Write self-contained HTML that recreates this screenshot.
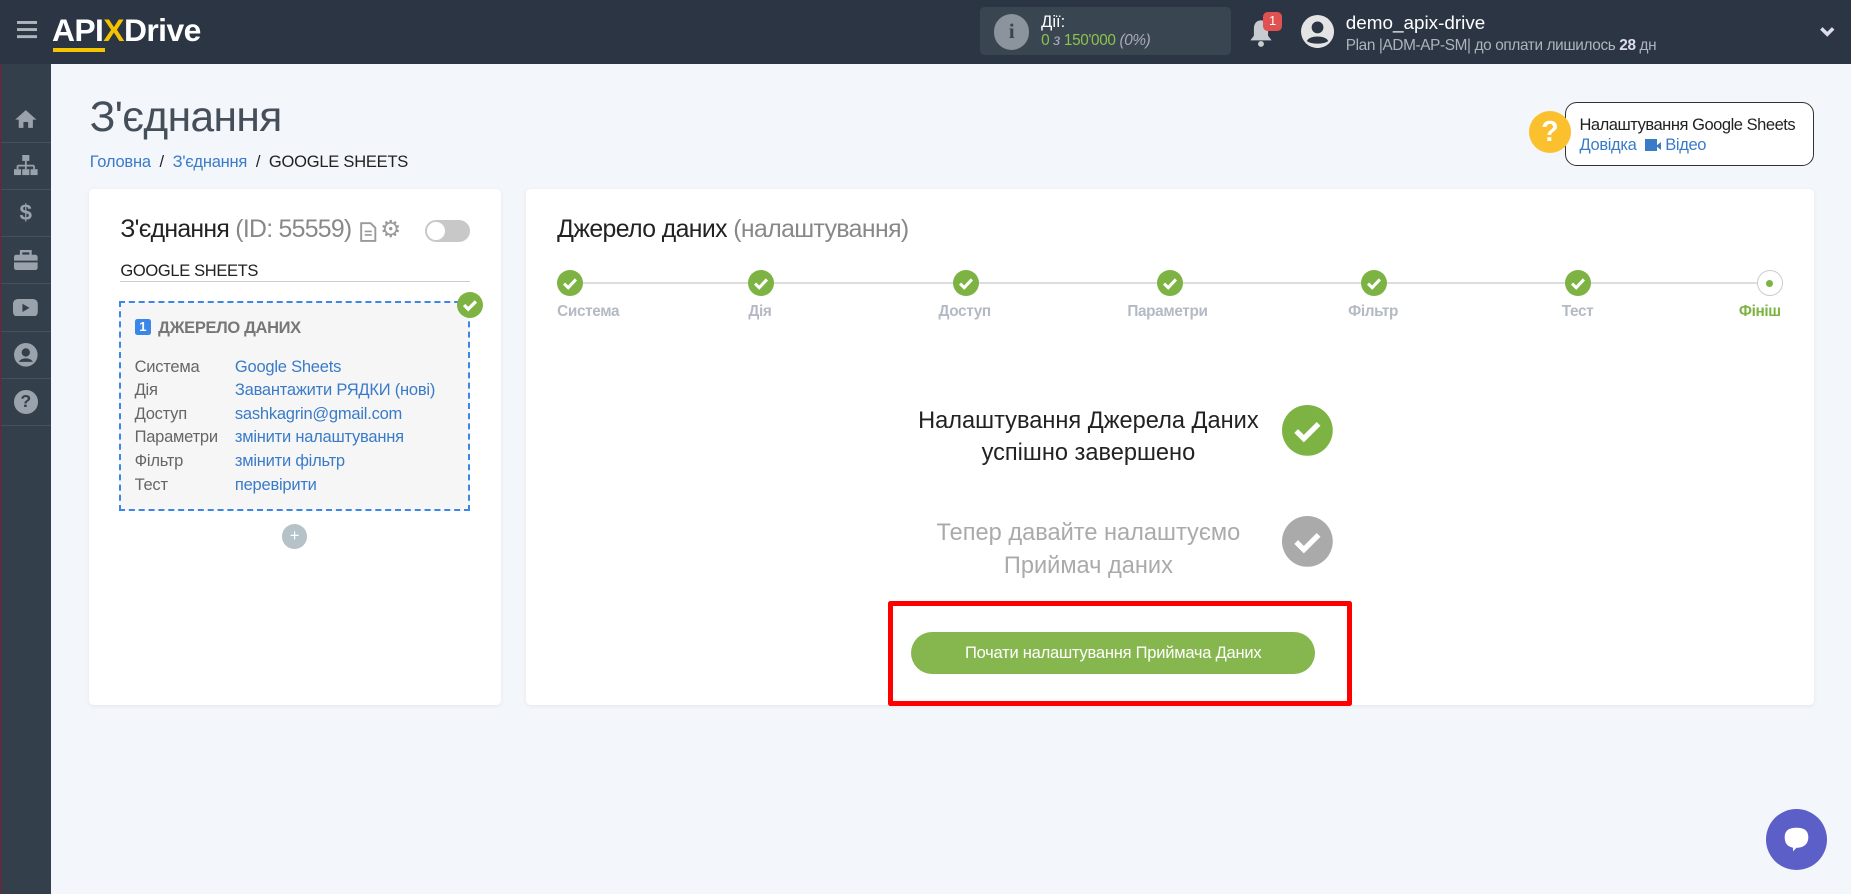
<!DOCTYPE html>
<html><head><meta charset="utf-8"><style>
*{margin:0;padding:0;box-sizing:border-box}
html,body{width:1851px;height:894px;overflow:hidden;background:#f3f6fa}
#w{zoom:1.18048;width:1568px;height:757px;position:relative;font-family:"Liberation Sans","DejaVu Sans",sans-serif;color:#222}
.a{position:absolute;white-space:nowrap}
.hd{left:0;top:0;width:1568px;height:54px;background:#2b3543}
.sb{left:0;top:54px;width:43px;height:703px;background:#343f4c;border-left:1px solid #7a1d35}
.si{position:absolute;left:0;width:42px;height:40px;border-bottom:1px solid #46515e;display:flex;align-items:center;justify-content:center}
.pn{background:#fff;border-radius:4px;box-shadow:0 1px 4px rgba(0,0,0,.06)}
.lnk{color:#3a7bc8}
.row{position:absolute;left:114px;font-size:14px;color:#666;white-space:nowrap;letter-spacing:-0.2px}
.row b{font-weight:normal;position:absolute;left:85px;color:#3a7bc8;white-space:nowrap}
.st{position:absolute;top:229px;width:22px;height:22px;border-radius:50%;background:#7cb342}
.sl{position:absolute;top:257px;font-size:13px;font-weight:bold;color:#b4bac4;letter-spacing:-0.3px}
</style></head><body><div id="w">
<div class="a hd"></div>
<svg class="a" style="left:14px;top:18px" width="17" height="15"><rect y="0" width="17" height="2.5" fill="#aeb4bb"/><rect y="6" width="17" height="2.5" fill="#aeb4bb"/><rect y="12" width="17" height="2.5" fill="#aeb4bb"/></svg>
<div class="a" style="left:44px;top:10px;font-size:27px;font-weight:bold;color:#fff;letter-spacing:-0.5px">API<span style="color:#f5c400">X</span>Drive</div>
<div class="a" style="left:45px;top:41px;width:44px;height:3px;background:#f5c400"></div>
<div class="a" style="left:830px;top:6px;width:213px;height:41px;background:#3a4552;border-radius:4px"></div>
<div class="a" style="left:842px;top:12px;width:30px;height:30px;border-radius:50%;background:#8b939c;color:#3a4552;font-weight:bold;font-size:18px;text-align:center;line-height:30px;font-family:'Liberation Serif',serif">i</div>
<div class="a" style="left:882px;top:10px;font-size:14px;color:#fff">Дії:</div>
<div class="a" style="left:882px;top:27px;font-size:13px;color:#8bc34a;letter-spacing:-0.3px">0 <i style="color:#aab">з</i> 150'000 <i style="color:#aab">(0%)</i></div>
<svg class="a" style="left:1057px;top:15px" width="22" height="26" viewBox="0 0 22 26"><path d="M11 2c-4 0-6 3-6 7v6l-3 4h18l-3-4V9c0-4-2-7-6-7z" fill="#c8ccd1"/><circle cx="11" cy="22" r="2.5" fill="#c8ccd1"/></svg>
<div class="a" style="left:1070px;top:10px;width:16px;height:16px;border-radius:4px;background:#e05151;color:#fff;font-size:11px;text-align:center;line-height:16px">1</div>
<svg class="a" style="left:1102px;top:13px" width="28" height="28" viewBox="0 0 28 28"><circle cx="14" cy="14" r="14" fill="#e4e4e4"/><circle cx="14" cy="10.5" r="5" fill="#2b3543"/><path d="M5 22c2-5 16-5 18 0c-3 3-15 3-18 0z" fill="#2b3543"/></svg>
<div class="a" style="left:1140px;top:11px;font-size:16px;color:#fff">demo_apix-drive</div>
<div class="a" style="left:1140px;top:31px;font-size:13px;color:#aeb4bc;letter-spacing:-0.3px">Plan |ADM-AP-SM| до оплати лишилось <b style="color:#dde">28</b> дн</div>
<svg class="a" style="left:1541px;top:22px" width="14" height="10"><path d="M2 2l5 5 5-5" stroke="#dde" stroke-width="3" fill="none"/></svg>
<div class="a sb">
<div class="si" style="top:27px"><svg width="20" height="16" viewBox="0 0 20 16"><path d="M10 1L1 9h3v7h4v-5h4v5h4V9h3z" fill="#9aa2ab"/></svg></div>
<div class="si" style="top:67px"><svg width="20" height="18"><rect x="7" y="0" width="6" height="5" fill="#9aa2ab"/><path d="M10 5v4M3 9h14M3 9v3M10 9v3M17 9v3" stroke="#9aa2ab" stroke-width="1.5"/><rect x="0" y="12" width="6" height="5" fill="#9aa2ab"/><rect x="7" y="12" width="6" height="5" fill="#9aa2ab"/><rect x="14" y="12" width="6" height="5" fill="#9aa2ab"/></svg></div>
<div class="si" style="top:107px;color:#9aa2ab;font-weight:bold;font-size:19px">$</div>
<div class="si" style="top:147px"><svg width="20" height="17"><rect x="0" y="4" width="20" height="13" rx="2" fill="#9aa2ab"/><rect x="6" y="1" width="8" height="4" fill="none" stroke="#9aa2ab" stroke-width="2"/><rect x="0" y="9" width="20" height="1.5" fill="#343f4c"/></svg></div>
<div class="si" style="top:187px"><svg width="21" height="15"><rect width="21" height="15" rx="4" fill="#9aa2ab"/><path d="M8 4l6 3.5-6 3.5z" fill="#343f4c"/></svg></div>
<div class="si" style="top:227px"><svg width="20" height="20"><circle cx="10" cy="10" r="10" fill="#9aa2ab"/><circle cx="10" cy="8" r="3.5" fill="#343f4c"/><path d="M4 16c2-4 10-4 12 0" fill="#343f4c"/></svg></div>
<div class="si" style="top:267px"><div style="width:20px;height:20px;border-radius:50%;background:#9aa2ab;color:#343f4c;font-weight:bold;font-size:15px;text-align:center;line-height:20px">?</div></div>
</div>
<div class="a" style="left:76px;top:80px;font-size:36px;color:#454f59;letter-spacing:-0.5px">З'єднання</div>
<div class="a" style="left:76px;top:129px;font-size:14px;color:#222;letter-spacing:-0.2px"><span class="lnk">Головна</span> &nbsp;/&nbsp; <span class="lnk">З'єднання</span> &nbsp;/&nbsp; GOOGLE SHEETS</div>
<div class="a" style="left:1326px;top:86px;width:211px;height:55px;background:#fff;border:1px solid #333;border-radius:10px"></div>
<div class="a" style="left:1295px;top:94px;width:36px;height:36px;border-radius:50%;background:#fbc02d;color:#fff;font-weight:bold;font-size:24px;text-align:center;line-height:36px">?</div>
<div class="a" style="left:1338px;top:97px;font-size:14px;color:#222;letter-spacing:-0.4px">Налаштування Google Sheets</div>
<div class="a" style="left:1338px;top:114px;font-size:14px;letter-spacing:-0.3px"><span class="lnk">Довідка</span> &nbsp;<span style="display:inline-block;width:10px;height:10px;background:#3a7bc8;vertical-align:-1px"></span><span style="display:inline-block;width:0;height:0;border:4px solid transparent;border-right:5px solid #3a7bc8;margin-left:-4px;vertical-align:0px"></span> <span class="lnk">Відео</span></div>
<div class="a pn" style="left:75px;top:160px;width:349px;height:437px"></div>
<div class="a" style="left:102px;top:183px;font-size:21px;color:#222;letter-spacing:-0.6px">З'єднання <span style="color:#888">(ID: 55559)</span></div>
<svg class="a" style="left:305px;top:188px" width="14" height="17"><path d="M1 1h8l4 4v11H1z" fill="none" stroke="#999" stroke-width="1.6"/><path d="M4 8h6M4 11h6" stroke="#999" stroke-width="1.4"/></svg>
<div class="a" style="left:322px;top:182px;font-size:20px;color:#999">⚙</div>
<div class="a" style="left:360px;top:186px;width:38px;height:19px;border-radius:10px;background:#c8c8c8"><div style="position:absolute;left:2px;top:2px;width:15px;height:15px;border-radius:50%;background:#fff"></div></div>
<div class="a" style="left:102px;top:221px;font-size:14px;color:#222;letter-spacing:-0.3px">GOOGLE SHEETS</div>
<div class="a" style="left:102px;top:238px;width:296px;height:1px;background:#ccc"></div>
<div class="a" style="left:101px;top:255px;width:297px;height:178px;background:#f6f6f6;border:2px dashed #3b87e8"></div>
<svg class="a" style="left:387px;top:247px" width="22" height="22"><circle cx="11" cy="11" r="11" fill="#7cb342"/><path d="M6 11l3.5 3.5L16 8" stroke="#fff" stroke-width="2.8" fill="none"/></svg>
<div class="a" style="left:114px;top:270px;width:14px;height:14px;background:#3b87e8;border-radius:2px;color:#fff;font-size:11px;font-weight:bold;text-align:center;line-height:14px">1</div>
<div class="a" style="left:134px;top:269px;font-size:14px;font-weight:bold;color:#777;letter-spacing:-0.3px">ДЖЕРЕЛО ДАНИХ</div>
<div class="row" style="top:302px">Система<b>Google Sheets</b></div>
<div class="row" style="top:322px">Дія<b>Завантажити РЯДКИ (нові)</b></div>
<div class="row" style="top:342px">Доступ<b>sashkagrin@gmail.com</b></div>
<div class="row" style="top:362px">Параметри<b>змінити налаштування</b></div>
<div class="row" style="top:382px">Фільтр<b>змінити фільтр</b></div>
<div class="row" style="top:402px">Тест<b>перевірити</b></div>
<div class="a" style="left:239px;top:444px;width:21px;height:21px;border-radius:50%;background:#b5c2c7;color:#fff;font-size:14px;text-align:center;line-height:21px">+</div>
<div class="a pn" style="left:446px;top:160px;width:1091px;height:437px"></div>
<div class="a" style="left:472px;top:183px;font-size:21px;color:#222;letter-spacing:-0.5px">Джерело даних <span style="color:#888">(налаштування)</span></div>
<div class="a" style="left:483px;top:239px;width:1016px;height:2px;background:#ddd"></div>
<svg width="0" height="0" style="position:absolute"><defs><path id="ck" d="M6 11.5l3.5 3.5L16 8" stroke="#fff" stroke-width="2.6" fill="none"/></defs></svg>
<div class="st" style="left:472px"><svg width="22" height="22"><use href="#ck"/></svg></div>
<div class="st" style="left:634px"><svg width="22" height="22"><use href="#ck"/></svg></div>
<div class="st" style="left:807px"><svg width="22" height="22"><use href="#ck"/></svg></div>
<div class="st" style="left:980px"><svg width="22" height="22"><use href="#ck"/></svg></div>
<div class="st" style="left:1153px"><svg width="22" height="22"><use href="#ck"/></svg></div>
<div class="st" style="left:1326px"><svg width="22" height="22"><use href="#ck"/></svg></div>
<div class="st" style="left:1488px;background:#fff;border:1px solid #ccc"><div style="position:absolute;left:7px;top:7px;width:6px;height:6px;border-radius:50%;background:#7cb342"></div></div>
<div class="sl" style="left:472px">Система</div>
<div class="sl" style="left:634px">Дія</div>
<div class="sl" style="left:795px">Доступ</div>
<div class="sl" style="left:955px">Параметри</div>
<div class="sl" style="left:1142px">Фільтр</div>
<div class="sl" style="left:1323px">Тест</div>
<div class="sl" style="left:1473px;color:#7cb342">Фініш</div>
<div class="a" style="left:722px;top:344px;width:400px;text-align:center;font-size:20px;line-height:27px;color:#222">Налаштування Джерела Даних<br>успішно завершено</div>
<svg class="a" style="left:1086px;top:343px" width="43" height="43"><circle cx="21.5" cy="21.5" r="21.5" fill="#7cb342"/><path d="M12 22l6.5 6.5L31 16" stroke="#fff" stroke-width="4.5" fill="none"/></svg>
<div class="a" style="left:722px;top:438px;width:400px;text-align:center;font-size:20px;line-height:28px;color:#aaa">Тепер давайте налаштуємо<br>Приймач даних</div>
<svg class="a" style="left:1086px;top:437px" width="43" height="43"><circle cx="21.5" cy="21.5" r="21.5" fill="#aaa"/><path d="M12 22l6.5 6.5L31 16" stroke="#fff" stroke-width="4.5" fill="none"/></svg>
<div class="a" style="left:752px;top:509px;width:393px;height:89px;border:5px solid #f00;border-radius:2px"></div>
<div class="a" style="left:772px;top:535px;width:342px;height:36px;border-radius:18px;background:#86b74e;color:#fff;font-size:14px;text-align:center;line-height:36px;letter-spacing:-0.2px">Почати налаштування Приймача Даних</div>
<div class="a" style="left:1496px;top:685px;width:52px;height:52px;border-radius:50%;background:#5b5fc7"></div>
<svg class="a" style="left:1508px;top:697px" width="28" height="28" viewBox="0 0 28 28"><path d="M4 12c0-6 4-8 10-8s10 2 10 8-4 9-10 9l-3 3v-3C7 20 4 18 4 12z" fill="#fff"/></svg>
</div></body></html>
